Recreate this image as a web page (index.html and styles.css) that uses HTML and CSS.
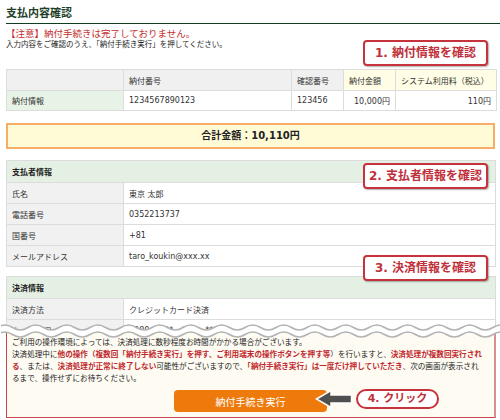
FILE: index.html
```html
<!DOCTYPE html>
<html lang="ja">
<head>
<meta charset="utf-8">
<title>支払内容確認</title>
<link rel="stylesheet" href="styles.css">
</head>
<body>
<div class="page">
  <h1 class="title">支払内容確認</h1>
  <p class="alert">【注意】納付手続きは完了しておりません。</p>
  <p class="lead">入力内容をご確認のうえ、「納付手続き実行」を押してください。</p>

  <table class="tbl tbl-pay">
    <colgroup>
      <col class="w-label"><col class="w-no"><col class="w-conf"><col class="w-amt"><col class="w-fee">
    </colgroup>
    <tr class="row-h">
      <th class="hd"></th>
      <th class="hd">納付番号</th>
      <th class="hd">確認番号</th>
      <th class="hd hd-y">納付金額</th>
      <th class="hd hd-y">システム利用料（税込）</th>
    </tr>
    <tr class="row-d">
      <th class="lb-g">納付情報</th>
      <td>1234567890123</td>
      <td>123456</td>
      <td class="num">10,000円</td>
      <td class="num">110円</td>
    </tr>
  </table>

  <div class="total">合計金額：10,110円</div>

  <table class="tbl tbl-info">
    <colgroup><col class="w-label"><col></colgroup>
    <tr class="row-s"><th class="sec" colspan="2">支払者情報</th></tr>
    <tr class="row-i"><th class="lb">氏名</th><td>東京 太郎</td></tr>
    <tr class="row-i"><th class="lb">電話番号</th><td>0352213737</td></tr>
    <tr class="row-i"><th class="lb">国番号</th><td>+81</td></tr>
    <tr class="row-i"><th class="lb">メールアドレス</th><td>taro_koukin@xxx.xx</td></tr>
  </table>

  <div class="cut">
    <table class="tbl tbl-info">
      <colgroup><col class="w-label"><col></colgroup>
      <tr class="row-s"><th class="sec" colspan="2">決済情報</th></tr>
      <tr class="row-i"><th class="lb">決済方法</th><td>クレジットカード決済</td></tr>
      <tr class="row-i"><th class="lb">カード番号</th><td>4980 - **** - **** - ****</td></tr>
    </table>
  </div>

  <div class="notice">
    <svg class="wave" width="500" height="18" viewBox="0 0 500 18" aria-hidden="true">
      <path class="wave-band" d="M-4 9 q7.75 -5 15.5 0 t15.5 0 t15.5 0 t15.5 0 t15.5 0 t15.5 0 t15.5 0 t15.5 0 t15.5 0 t15.5 0 t15.5 0 t15.5 0 t15.5 0 t15.5 0 t15.5 0 t15.5 0 t15.5 0 t15.5 0 t15.5 0 t15.5 0 t15.5 0 t15.5 0 t15.5 0 t15.5 0 t15.5 0 t15.5 0 t15.5 0 t15.5 0 t15.5 0 t15.5 0 t15.5 0 t15.5 0 t15.5 0"/>
      <path class="wave-line" d="M-4 5.5 q7.75 -5 15.5 0 t15.5 0 t15.5 0 t15.5 0 t15.5 0 t15.5 0 t15.5 0 t15.5 0 t15.5 0 t15.5 0 t15.5 0 t15.5 0 t15.5 0 t15.5 0 t15.5 0 t15.5 0 t15.5 0 t15.5 0 t15.5 0 t15.5 0 t15.5 0 t15.5 0 t15.5 0 t15.5 0 t15.5 0 t15.5 0 t15.5 0 t15.5 0 t15.5 0 t15.5 0 t15.5 0 t15.5 0 t15.5 0"/>
      <path class="wave-line" d="M-4 12.5 q7.75 -5 15.5 0 t15.5 0 t15.5 0 t15.5 0 t15.5 0 t15.5 0 t15.5 0 t15.5 0 t15.5 0 t15.5 0 t15.5 0 t15.5 0 t15.5 0 t15.5 0 t15.5 0 t15.5 0 t15.5 0 t15.5 0 t15.5 0 t15.5 0 t15.5 0 t15.5 0 t15.5 0 t15.5 0 t15.5 0 t15.5 0 t15.5 0 t15.5 0 t15.5 0 t15.5 0 t15.5 0 t15.5 0 t15.5 0"/>
    </svg>
    <p class="notice-text">ご利用の操作環境によっては、決済処理に数秒程度お時間がかかる場合がございます。<br>決済処理中に<strong>他の操作（複数回「納付手続き実行」を押す、ご利用端末の操作ボタンを押す等</strong>）を行いますと、<strong>決済処理が複数回実行され</strong><br><strong>る</strong>、または、<strong>決済処理が正常に終了しない</strong>可能性がございますので、<strong>「納付手続き実行」は一度だけ押していただき</strong>、次の画面が表示され<br>るまで、操作せずにお待ちください。</p>
    <div class="actions">
      <button class="exec" type="button">納付手続き実行</button>
    </div>
  </div>

  <div class="callout c1">1. 納付情報を確認</div>
  <div class="callout c2">2. 支払者情報を確認</div>
  <div class="callout c3">3. 決済情報を確認</div>
  <svg class="arrow" width="38" height="20" viewBox="0 0 38 20" aria-hidden="true">
    <polygon points="1.5,10 16,1.5 16,6 36.5,6 36.5,14 16,14 16,18.5"/>
  </svg>
  <div class="pill">4. クリック</div>
</div>
</body>
</html>
```

FILE: styles.css
```css
* { box-sizing: border-box; }
html, body { margin: 0; padding: 0; background: #fff; }
body {
  font-family: "DejaVu Sans", "Noto Sans CJK JP", sans-serif;
  color: #333;
  width: 500px;
  height: 420px;
  overflow: hidden;
}
.page {
  position: relative;
  padding: 0 4px 0 6px;
}
.title {
  margin: 0 -4px 0 0;
  padding: 7px 0 2px;
  font-size: 11px;
  line-height: 14px;
  font-weight: bold;
  color: #1d3f28;
  border-bottom: 1px solid #0f3d1f;
}
.alert {
  margin: 4px 0 0;
  font-size: 9.5px;
  line-height: 12px;
  color: #c4302e;
}
.lead {
  margin: 0;
  font-size: 7.5px;
  line-height: 10px;
  color: #222;
}

/* tables */
.tbl {
  width: 490px;
  border-collapse: collapse;
  table-layout: fixed;
  font-size: 8px;
  color: #333;
}
.tbl th, .tbl td {
  border: 1px solid #dcdcdc;
  padding: 0 5px;
  text-align: left;
  font-weight: normal;
  white-space: nowrap;
  overflow: hidden;
  vertical-align: middle;
}
.w-label { width: 117px; }
.w-no { width: 168px; }
.w-conf { width: 52px; }
.w-amt { width: 52px; }
.w-fee { width: 101px; }

.tbl-pay { margin-top: 19px; }
.row-h { height: 21px; }
.row-d { height: 20px; }
.hd { background: #f0f0f0; }
.hd-y { background: #fffde6; }
.lb-g { background: #e7f3e6; }
.num { text-align: right !important; }

.total {
  margin-top: 12px;
  width: 489px;
  height: 26px;
  line-height: 22px;
  border: 2px solid #f6ad66;
  background: #fffbd7;
  text-align: center;
  font-size: 10px;
  font-weight: bold;
  color: #222;
}

.tbl-info { margin-top: 11px; }
.row-s { height: 22px; }
.row-i { height: 21px; }
.sec {
  background: #e4f0e4;
  font-weight: bold !important;
  color: #222;
}
.lb { background: #f1f1f1; }

.cut {
  margin-top: 9px;
  height: 55px;
  overflow: hidden;
}
.cut .tbl-info { margin-top: 0; }

/* notice */
.notice {
  position: relative;
  width: 490px;
  padding: 6px 0 5px 5px;
  background: #fdfbf2;
  border: 1.5px solid #c7474a;
  border-top: 0;
  border-right-color: #d98f90;
  border-right-width: 2px;
}
.wave {
  position: absolute;
  left: -6px;
  top: -9px;
  display: block;
}
.wave-band { fill: none; stroke: #fff; stroke-width: 7; }
.wave-line { fill: none; stroke: #b3b3b3; stroke-width: 1.6; }
.notice-text {
  margin: 0;
  font-size: 7.6px;
  line-height: 12px;
  color: #222;
  white-space: nowrap;
}
.notice-text strong {
  color: #c1282e;
  font-weight: bold;
}
.actions {
  margin-top: 5px;
  display: flex;
  justify-content: center;
  padding-right: 5px;
}
.exec {
  width: 153px;
  height: 22px;
  border: 0;
  border-radius: 4px;
  background: #ef7a0c;
  color: #fff;
  font-family: "DejaVu Sans", "Noto Sans CJK JP", sans-serif;
  font-size: 10px;
  padding: 0;
}

/* overlays */
.callout {
  position: absolute;
  left: 363px;
  width: 125px;
  height: 26px;
  border: 2px solid #c5343c;
  border-radius: 4px;
  background: #fff;
  box-shadow: 1px 1px 1.5px rgba(0,0,0,0.3);
  color: #c0303a;
  font-size: 12px;
  font-weight: bold;
  line-height: 22px;
  text-align: center;
  white-space: nowrap;
}
.c1 { top: 40px; }
.c2 { top: 163px; }
.c3 { top: 255px; }
.arrow {
  position: absolute;
  left: 315px;
  top: 389px;
}
.arrow polygon {
  fill: #4f4f4f;
  stroke: #fff;
  stroke-width: 1.5;
  stroke-linejoin: miter;
}
.pill {
  position: absolute;
  left: 356px;
  top: 389px;
  width: 83px;
  height: 20px;
  border: 2px solid #c5343c;
  border-radius: 10px;
  background: #fff;
  color: #c0303a;
  font-size: 11px;
  font-weight: bold;
  line-height: 16px;
  text-align: center;
  white-space: nowrap;
}
```
